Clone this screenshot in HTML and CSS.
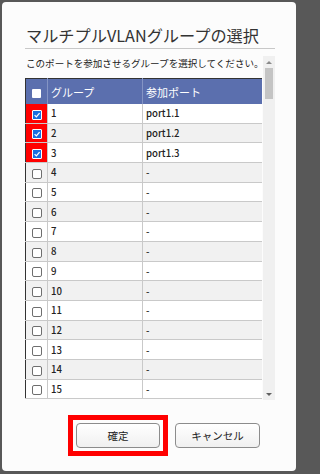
FILE: index.html
```html
<!DOCTYPE html>
<html lang="ja">
<head>
<meta charset="utf-8">
<link rel="stylesheet" href="styles.css">
</head>
<body>
<div class="dialog">
  <h1 class="title">マルチプルVLANグループの選択</h1>
  <div class="rule"></div>
  <div class="scroll">
    <div class="content">
      <p class="desc">このポートを参加させるグループを選択してください。</p>
      <table class="grid">
        <colgroup><col class="c1"><col class="c2"><col class="c3"></colgroup>
        <thead>
          <tr><th class="cbcell"><span class="hbox"></span></th><th>グループ</th><th>参加ポート</th></tr>
        </thead>
        <tbody>
          <tr><td class="cbcell hl"><span class="box on"><svg viewBox="0 0 10 10"><path d="M2 5.2 L4.2 7.4 L8.2 2.6" fill="none" stroke="#fff" stroke-width="1.6"/></svg></span></td><td>1</td><td>port1.1</td></tr>
          <tr class="alt"><td class="cbcell hl"><span class="box on"><svg viewBox="0 0 10 10"><path d="M2 5.2 L4.2 7.4 L8.2 2.6" fill="none" stroke="#fff" stroke-width="1.6"/></svg></span></td><td>2</td><td>port1.2</td></tr>
          <tr><td class="cbcell hl"><span class="box on"><svg viewBox="0 0 10 10"><path d="M2 5.2 L4.2 7.4 L8.2 2.6" fill="none" stroke="#fff" stroke-width="1.6"/></svg></span></td><td>3</td><td>port1.3</td></tr>
          <tr class="alt"><td class="cbcell"><span class="box"></span></td><td>4</td><td>-</td></tr>
          <tr><td class="cbcell"><span class="box"></span></td><td>5</td><td>-</td></tr>
          <tr class="alt"><td class="cbcell"><span class="box"></span></td><td>6</td><td>-</td></tr>
          <tr><td class="cbcell"><span class="box"></span></td><td>7</td><td>-</td></tr>
          <tr class="alt"><td class="cbcell"><span class="box"></span></td><td>8</td><td>-</td></tr>
          <tr><td class="cbcell"><span class="box"></span></td><td>9</td><td>-</td></tr>
          <tr class="alt"><td class="cbcell"><span class="box"></span></td><td>10</td><td>-</td></tr>
          <tr><td class="cbcell"><span class="box"></span></td><td>11</td><td>-</td></tr>
          <tr class="alt"><td class="cbcell"><span class="box"></span></td><td>12</td><td>-</td></tr>
          <tr><td class="cbcell"><span class="box"></span></td><td>13</td><td>-</td></tr>
          <tr class="alt"><td class="cbcell"><span class="box"></span></td><td>14</td><td>-</td></tr>
          <tr><td class="cbcell"><span class="box"></span></td><td>15</td><td>-</td></tr>
        </tbody>
      </table>
    </div>
    <div class="sbar">
      <div class="arrow up"></div>
      <div class="thumb"></div>
      <div class="track"></div>
      <div class="arrow down"></div>
    </div>
  </div>
  <div class="actions">
    <div class="mark"><button class="btn">確定</button></div>
    <button class="btn cancel">キャンセル</button>
  </div>
</div>
</body>
</html>
```

FILE: styles.css
```css
html {
  margin: 0;
  padding: 0;
  overflow: hidden;
}
body {
  margin: 0;
  padding: 0;
  width: 300px;
  height: 474px;
  background: #585858;
  font-family: "Noto Sans CJK JP", "Noto Sans", sans-serif;
  color: #222;
  overflow: hidden;
}
.dialog {
  box-sizing: border-box;
  margin: 2px 4px 0 2px;
  height: 469px;
  background: #fcfcfc;
  border-radius: 4px;
  padding: 21px 21px 0 23px;
  display: flex;
  flex-direction: column;
  overflow: hidden;
}
.title {
  margin: 0;
  font-size: 16.2px;
  line-height: 24px;
  font-weight: 400;
  color: #333;
  padding-left: 1px;
  white-space: nowrap;
}
.rule {
  margin-top: 1px;
  height: 1px;
  background: #c8c8c8;
}
.scroll {
  margin-top: 7px;
  height: 344px;
  display: flex;
  overflow: hidden;
}
.content {
  width: 238px;
  overflow: hidden;
}
.desc {
  margin: 0 0 8px 1px;
  font-size: 9.55px;
  line-height: 14px;
  white-space: nowrap;
  color: #222;
}
.grid {
  width: 238px;
  border-collapse: collapse;
  table-layout: fixed;
  border-left: 1px solid #333;
  border-right: 1px solid #333;
  border-top: 1px solid #333;
}
.c1 { width: 22px; }
.c2 { width: 95px; }
.grid th {
  height: 25px;
  padding: 0 0 0 3px;
  background: #5b6fae;
  color: #fff;
  font-size: 11px;
  font-weight: 400;
  text-align: left;
  border-left: 1px solid #8494c4;
}
.grid th:first-child { border-left: none; }
.grid td {
  height: 18.7px;
  padding: 0 0 0 3px;
  font-size: 9.6px;
  font-weight: 500;
  border-bottom: 1px solid #c9c9c9;
  border-left: 1px solid #c9c9c9;
  background: #fff;
}
.grid tr.alt td { background: #f1f1f1; }
.grid td.cbcell, .grid th.cbcell {
  padding: 0;
  text-align: center;
  border-left: none;
}
.grid td.hl, .grid tr.alt td.hl { background: #f00; }
.hbox {
  display: inline-block;
  width: 9px;
  height: 9px;
  background: #fff;
  border-radius: 1px;
  vertical-align: middle;
}
.box {
  display: inline-block;
  box-sizing: border-box;
  width: 10px;
  height: 10px;
  border: 1px solid #6e6e6e;
  border-radius: 2px;
  background: #fff;
  vertical-align: middle;
}
.box.on {
  border: 1px solid #fff;
  background: #1a6fe0;
  border-radius: 1px;
}
.box svg {
  display: block;
  width: 8px;
  height: 8px;
}
.sbar {
  width: 12px;
  margin-left: 1px;
  background: #f0f0f0;
  display: flex;
  flex-direction: column;
  align-items: center;
}
.arrow {
  width: 0;
  height: 0;
  border-left: 3px solid transparent;
  border-right: 3px solid transparent;
}
.arrow.up {
  margin-top: 5px;
  border-bottom: 3px solid #8a8a8a;
}
.arrow.down {
  margin-bottom: 4px;
  border-top: 3px solid #606060;
}
.thumb {
  margin-top: 4px;
  width: 8px;
  height: 31px;
  background: #c4c4c4;
}
.track { flex: 1; }
.actions {
  margin-top: 15px;
  display: flex;
  align-items: center;
  padding-left: 43px;
}
.mark {
  border: 5px solid #f00;
  padding: 3px;
  display: flex;
}
.btn {
  box-sizing: border-box;
  width: 84px;
  height: 25px;
  border: 1px solid #8c8c8c;
  border-radius: 4px;
  background: linear-gradient(#ffffff, #f0f0f0);
  font-family: "Noto Sans CJK JP", "Noto Sans", sans-serif;
  font-size: 10.5px;
  color: #222;
  padding: 0;
}
.cancel {
  width: 85px;
  margin-left: 7px;
}
```
